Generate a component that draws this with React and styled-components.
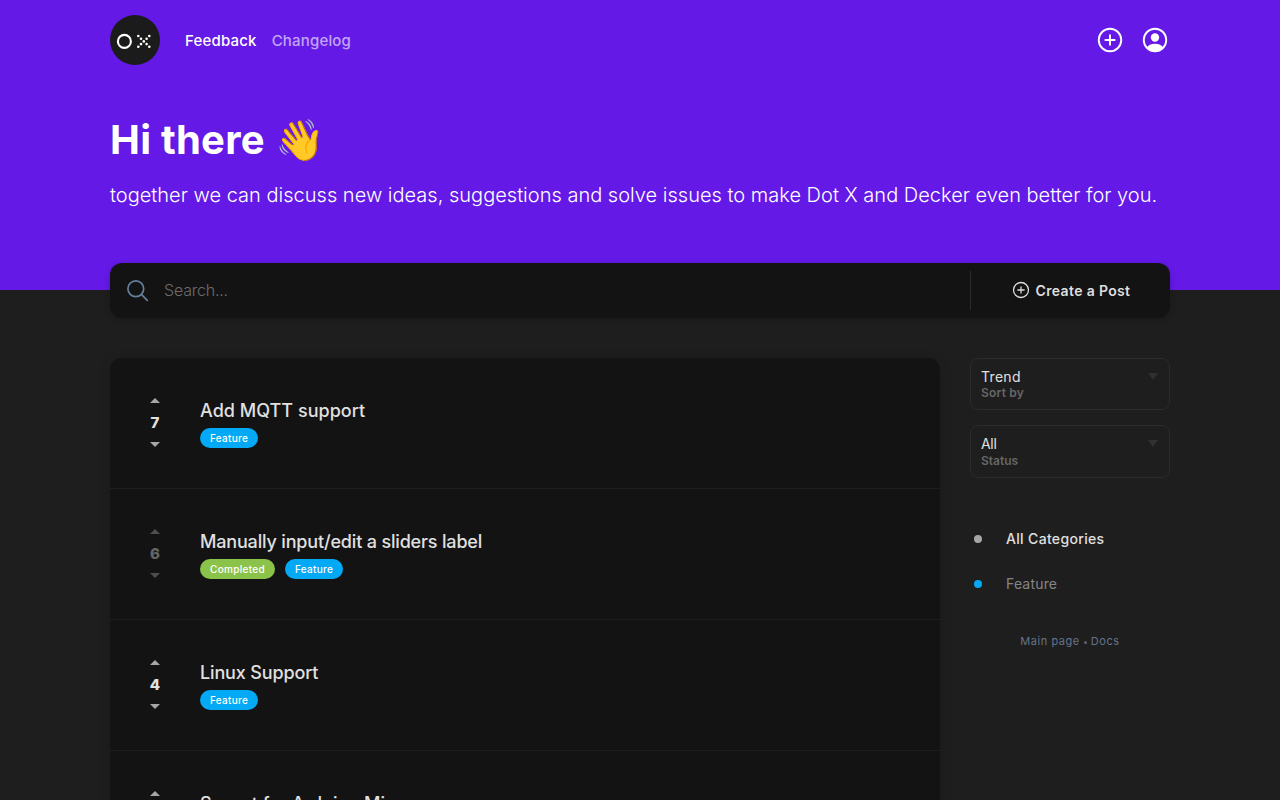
import React from "react";
import styled, { createGlobalStyle } from "styled-components";

const GlobalStyle = createGlobalStyle`
  *, *::before, *::after { box-sizing: border-box; }
  html, body { margin: 0; background: #1e1e1e; }
  html { height: 100%; overflow: hidden; }
  body { height: 100%; overflow: hidden; }
  body, button, input {
    font-family: Inter, "Liberation Sans", sans-serif;
  }
  h1, h2, p { margin: 0; }
`;

const Container = styled.div`
  width: 1060px;
  margin: 0 auto;
`;

const Hero = styled.header`
  height: 290px;
  background: #6419e6;
  color: #fff;
`;

const NavBar = styled.nav`
  display: flex;
  align-items: center;
  height: 80px;
`;

const NavLinks = styled.div`
  display: flex;
  gap: 15px;
  margin-left: 25px;
  margin-right: auto;
`;

const NavLink = styled.a`
  font-size: 15px;
  line-height: 20px;
  font-weight: 500;
  letter-spacing: 0.18px;
  margin-top: 2px;
  opacity: ${(p) => (p.$active ? 1 : 0.6)};
`;

const NavIcons = styled.div`
  display: flex;
  gap: 15px;
`;

const Greeting = styled.h1`
  margin-top: 35px;
  font-size: 40px;
  line-height: 50px;
  font-weight: 700;
  letter-spacing: 0.25px;
`;

const Intro = styled.p`
  margin-top: 15px;
  font-size: 20px;
  line-height: 30px;
  font-weight: 300;
  letter-spacing: 0.01px;
  white-space: nowrap;
`;

const SearchBar = styled.div`
  display: flex;
  align-items: center;
  height: 55px;
  margin-top: -27px;
  padding-left: 15px;
  border-radius: 12px;
  background: #131313;
  box-shadow: 0 2px 6px rgba(0, 0, 0, 0.2);
  position: relative;
`;

const SearchInput = styled.input`
  flex: 1;
  min-width: 0;
  margin-left: 9px;
  padding: 0 5px 2px;
  border: 0;
  outline: 0;
  background: none;
  color: #ddd;
  font-size: 16px;
  font-weight: 300;
  letter-spacing: -0.2px;
  &::placeholder { color: #6c6c6c; opacity: 1; }
`;

const CreateButton = styled.button`
  display: flex;
  align-items: center;
  justify-content: center;
  gap: 5px;
  width: 200px;
  height: 39px;
  padding: 0 0 1px;
  border: 0;
  border-left: 1px solid #2b2b2b;
  background: none;
  color: #dedede;
  font-size: 14px;
  font-weight: 600;
  letter-spacing: 0.35px;
`;

const Columns = styled.main`
  display: flex;
  align-items: flex-start;
  gap: 30px;
  margin-top: 40px;
`;

const PostList = styled.section`
  width: 830px;
  border-radius: 12px;
  background: #131313;
  box-shadow: 0 2px 12px rgba(0, 0, 0, 0.15);
`;

const Post = styled.article`
  display: flex;
  height: 131px;
  border-bottom: 1px solid #1e1e1e;
`;

const Votes = styled.div`
  display: flex;
  flex-direction: column;
  align-items: center;
  width: 90px;
  padding-top: 40px;
  color: #e0e0e0;
  opacity: ${(p) => (p.$locked ? 0.4 : 1)};
`;

const Count = styled.span`
  margin: 10px 0 9px;
  font-size: 15px;
  line-height: 20px;
  font-weight: 800;
`;

const Arrow = styled.span`
  border: 5px solid transparent;
  border-width: ${(p) => (p.$up ? "0 5px 5px" : "5px 5px 0")};
  border-${(p) => (p.$up ? "bottom" : "top")}-color: #a6a6a6;
`;

const PostBody = styled.div`
  padding-top: 41px;
`;

const PostTitle = styled.h2`
  color: #e0e0e0;
  font-size: 18px;
  line-height: 24px;
  font-weight: 500;
  letter-spacing: ${(p) => p.$tracking || 0}px;
`;

const Tags = styled.div`
  display: flex;
  gap: 10px;
  margin-top: 5px;
`;

const Tag = styled.span`
  height: 20px;
  padding: 0 10px;
  border-radius: 10px;
  background: ${(p) => p.$color};
  color: #fff;
  font-size: 10px;
  line-height: 20px;
  font-weight: 500;
  letter-spacing: 0.3px;
`;

const Sidebar = styled.aside`
  width: 200px;
`;

const Select = styled.div`
  display: flex;
  justify-content: space-between;
  height: ${(p) => p.$height}px;
  margin-bottom: 15px;
  padding: 9px 11px 9px 10px;
  border: 1px solid #2b2b2b;
  border-radius: 8px;
`;

const SelectValue = styled.div`
  color: #e0e0e0;
  font-size: 14px;
  line-height: 18px;
  letter-spacing: ${(p) => p.$tracking}px;
`;

const SelectLabel = styled.div`
  color: #666;
  font-size: 12px;
  line-height: ${(p) => p.$line}px;
  font-weight: 600;
  letter-spacing: ${(p) => p.$tracking}px;
`;

const Caret = styled.span`
  height: 0;
  margin-top: 5px;
  border: 5px solid transparent;
  border-top: 7px solid #303030;
  border-bottom: 0;
`;

const Categories = styled.div`
  display: flex;
  flex-direction: column;
  gap: 25px;
  margin-top: 51px;
  padding-left: 4px;
`;

const Category = styled.div`
  display: flex;
  align-items: center;
  gap: 24px;
  color: ${(p) => (p.$active ? "#e0e0e0" : "#858585")};
  font-size: 14px;
  line-height: 20px;
  font-weight: ${(p) => (p.$active ? 500 : 400)};
  letter-spacing: ${(p) => (p.$active ? 0.33 : 0.18)}px;
`;

const Dot = styled.span`
  width: 8px;
  height: 8px;
  border-radius: 50%;
  background: ${(p) => p.$color};
`;

const FooterLinks = styled.footer`
  display: flex;
  justify-content: center;
  align-items: center;
  gap: 4px;
  margin-top: 39px;
  color: #64748b;
  font-size: 11px;
  line-height: 16px;
  letter-spacing: 0.55px;
`;

const Separator = styled.span`
  width: 3px;
  height: 3px;
  margin-top: 3px;
  border-radius: 50%;
  background: #5c6470;
`;

const CROSS = [
  [28.3, 21], [39.3, 21], [31, 23.7], [36.6, 23.7], [33.8, 26.4],
  [31, 29.1], [36.6, 29.1], [28.3, 31.8], [39.3, 31.8],
];

const Logo = () => (
  <svg width="50" height="50" viewBox="0 0 50 50">
    <circle cx="25" cy="25" r="25" fill="#1b1b1b" />
    <circle cx="14.4" cy="26.4" r="6.5" fill="none" stroke="#fff" strokeWidth="2.1" />
    {CROSS.map(([x, y]) => (
      <circle key={`${x}-${y}`} cx={x} cy={y} r="1.3" fill="#fff" />
    ))}
  </svg>
);

const PlusCircle = ({ size, stroke }) => (
  <svg width={size} height={size} viewBox="0 0 30 30" fill="none" stroke="currentColor" strokeWidth={stroke}>
    <circle cx="15" cy="15" r="11.25" />
    <path d="M15 9.6v10.8M9.6 15h10.8" />
  </svg>
);

const UserCircle = () => (
  <svg width="30" height="30" viewBox="0 0 30 30">
    <circle cx="15" cy="15" r="11.25" fill="none" stroke="currentColor" strokeWidth="1.9" />
    <circle cx="15" cy="12.5" r="4.2" fill="currentColor" />
    <path d="M6.6 22.4C8.8 19.9 11.8 18.8 15 18.8s6.2 1.1 8.4 3.6A11.2 11.2 0 0 1 15 26.2 11.2 11.2 0 0 1 6.6 22.4Z" fill="currentColor" />
  </svg>
);

const SearchIcon = () => (
  <svg width="25" height="25" viewBox="0 0 25 25" fill="none" stroke="#64809c" strokeWidth="1.7">
    <circle cx="10.8" cy="10.8" r="7.9" />
    <path d="M16.6 16.6l5.7 5.7" strokeLinecap="round" />
  </svg>
);

const FEATURE = { name: "Feature", color: "#03a9f4" };
const COMPLETED = { name: "Completed", color: "#8bc34a" };

const POSTS = [
  { votes: 7, title: "Add MQTT support", tags: [FEATURE], tracking: 0.03 },
  { votes: 6, title: "Manually input/edit a sliders label", tags: [COMPLETED, FEATURE], locked: true, tracking: -0.17 },
  { votes: 4, title: "Linux Support", tags: [FEATURE], tracking: -0.15 },
  { votes: 3, title: "Suport for Arduino Micro", tags: [FEATURE] },
];

export default function App() {
  return (
    <>
      <GlobalStyle />
      <Hero>
        <Container>
          <NavBar>
            <Logo />
            <NavLinks>
              <NavLink $active>Feedback</NavLink>
              <NavLink>Changelog</NavLink>
            </NavLinks>
            <NavIcons>
              <PlusCircle size={30} stroke={1.9} />
              <UserCircle />
            </NavIcons>
          </NavBar>
          <Greeting>Hi there 👋</Greeting>
          <Intro>
            together we can discuss new ideas, suggestions and solve issues to make Dot X and Decker even better for you.
          </Intro>
        </Container>
      </Hero>
      <Container>
        <SearchBar>
          <SearchIcon />
          <SearchInput placeholder="Search..." />
          <CreateButton>
            <PlusCircle size={20} stroke={1.9} />
            Create a Post
          </CreateButton>
        </SearchBar>
        <Columns>
          <PostList>
            {POSTS.map((post) => (
              <Post key={post.title}>
                <Votes $locked={post.locked}>
                  <Arrow $up />
                  <Count>{post.votes}</Count>
                  <Arrow />
                </Votes>
                <PostBody>
                  <PostTitle $tracking={post.tracking}>{post.title}</PostTitle>
                  <Tags>
                    {post.tags.map((tag) => (
                      <Tag key={tag.name} $color={tag.color}>{tag.name}</Tag>
                    ))}
                  </Tags>
                </PostBody>
              </Post>
            ))}
          </PostList>
          <Sidebar>
            <Select $height={52}>
              <div>
                <SelectValue $tracking={0.3}>Trend</SelectValue>
                <SelectLabel $line={14} $tracking={0.2}>Sort by</SelectLabel>
              </div>
              <Caret />
            </Select>
            <Select $height={53}>
              <div>
                <SelectValue $tracking={-0.3}>All</SelectValue>
                <SelectLabel $line={15} $tracking={0}>Status</SelectLabel>
              </div>
              <Caret />
            </Select>
            <Categories>
              <Category $active>
                <Dot $color="#a6a6a6" />
                All Categories
              </Category>
              <Category>
                <Dot $color="#03a9f4" />
                Feature
              </Category>
            </Categories>
            <FooterLinks>
              <span>Main page</span>
              <Separator />
              <span>Docs</span>
            </FooterLinks>
          </Sidebar>
        </Columns>
      </Container>
    </>
  );
}
